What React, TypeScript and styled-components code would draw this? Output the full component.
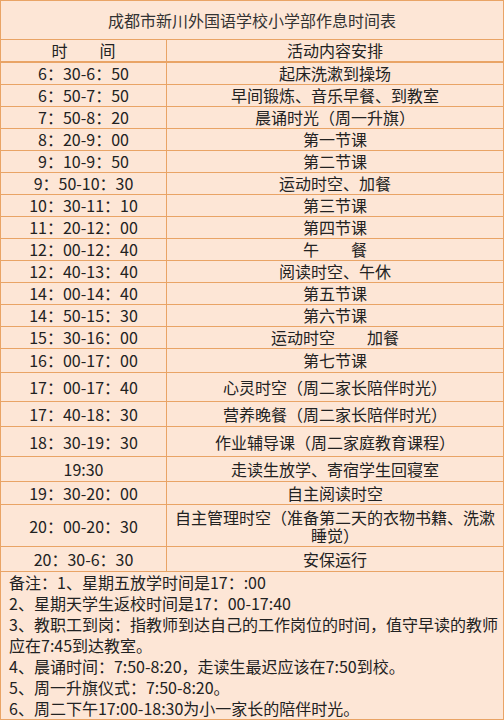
import styled, { createGlobalStyle } from "styled-components";

const line = "#e9a466";
const paper = "#fde6d6";

const rows: [string, string, number][] = [
  ["6：30-6：50", "起床洗漱到操场", 22],
  ["6：50-7：50", "早间锻炼、音乐早餐、到教室", 22],
  ["7：50-8：20", "晨诵时光（周一升旗）", 22],
  ["8：20-9：00", "第一节课", 22],
  ["9：10-9：50", "第二节课", 22],
  ["9：50-10：30", "运动时空、加餐", 22],
  ["10：30-11：10", "第三节课", 22],
  ["11：20-12：00", "第四节课", 22],
  ["12：00-12：40", "午　　餐", 22],
  ["12：40-13：40", "阅读时空、午休", 22],
  ["14：00-14：40", "第五节课", 22],
  ["14：50-15：30", "第六节课", 22],
  ["15：30-16：00", "运动时空　　加餐", 22],
  ["16：00-17：00", "第七节课", 25],
  ["17：00-17：40", "心灵时空（周二家长陪伴时光）", 29],
  ["17：40-18：30", "营养晚餐（周二家长陪伴时光）", 25],
  ["18：30-19：30", "作业辅导课（周二家庭教育课程）", 30],
  ["19:30", "走读生放学、寄宿学生回寝室", 25],
  ["19：30-20：00", "自主阅读时空", 23],
  ["20：00-20：30", "自主管理时空（准备第二天的衣物书籍、洗漱睡觉）", 42],
  ["20：30-6：30", "安保运行", 25],
];

const notes = [
  "备注：1、星期五放学时间是17：:00",
  "2、星期天学生返校时间是17：00-17:40",
  "3、教职工到岗：指教师到达自己的工作岗位的时间，值守早读的教师",
  "应在7:45到达教室。",
  "4、晨诵时间：7:50-8:20，走读生最迟应该在7:50到校。",
  "5、周一升旗仪式：7:50-8:20。",
  "6、周二下午17:00-18:30为小一家长的陪伴时光。",
];

export default function App() {
  return <>
    <GlobalStyle />
    <Sheet>
      <Title>成都市新川外国语学校小学部作息时间表</Title>
      <Row $h={23} $thick>
        <TimeCell>时　　间</TimeCell>
        <Cell>活动内容安排</Cell>
      </Row>
      {rows.map(([time, what, h]) =>
        <Row key={time} $h={h}>
          <TimeCell>{time}</TimeCell>
          <Cell>{what}</Cell>
        </Row>
      )}
      <Notes>
        {notes.map(n => <NoteLine key={n}>{n}</NoteLine>)}
      </Notes>
    </Sheet>
  </>;
}

const GlobalStyle = createGlobalStyle`
  html, body {
    margin: 0;
    padding: 0;
    background: ${paper};
  }
  * {
    box-sizing: border-box;
  }
`;

const Sheet = styled.div`
  width: 504px;
  height: 720px;
  background: ${paper};
  border: 1px solid ${line};
  font-family: "Noto Sans CJK SC", "Noto Sans", sans-serif;
  font-size: 16px;
  line-height: 18px;
  color: #222;
  display: flex;
  flex-direction: column;
`;

const Title = styled.div`
  height: 39px;
  border-bottom: 1px solid ${line};
  display: flex;
  align-items: center;
  justify-content: center;
  color: #333;
`;

const Row = styled.div<{ $h: number; $thick?: boolean }>`
  display: grid;
  grid-template-columns: 166px 1fr;
  height: ${p => p.$h}px;
  border-bottom: ${p => (p.$thick ? 2 : 1)}px solid ${line};
`;

const Cell = styled.div`
  display: flex;
  align-items: center;
  justify-content: center;
  text-align: center;
  padding: 0 6px;
`;

const TimeCell = styled(Cell)`
  border-right: 1px solid ${line};
  white-space: pre;
`;

const Notes = styled.div`
  flex: 1;
  padding: 0 0 0 8px;
  line-height: 21px;
`;

const NoteLine = styled.div`
  white-space: nowrap;
`;
